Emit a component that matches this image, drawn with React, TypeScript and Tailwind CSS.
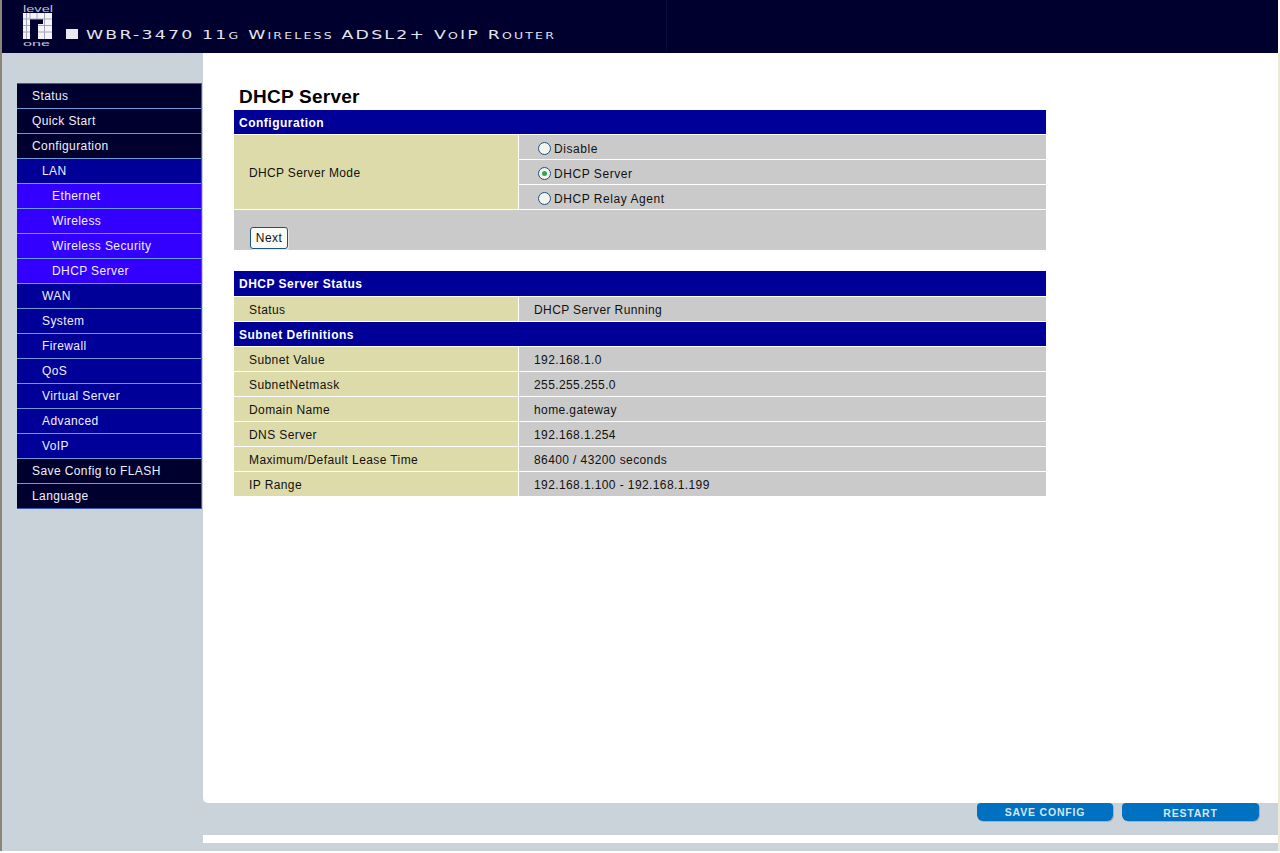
const menu: [string, number][] = [
  ["Status", 0],
  ["Quick Start", 0],
  ["Configuration", 0],
  ["LAN", 1],
  ["Ethernet", 2],
  ["Wireless", 2],
  ["Wireless Security", 2],
  ["DHCP Server", 2],
  ["WAN", 1],
  ["System", 1],
  ["Firewall", 1],
  ["QoS", 1],
  ["Virtual Server", 1],
  ["Advanced", 1],
  ["VoIP", 1],
  ["Save Config to FLASH", 0],
  ["Language", 0],
];

const rows: [string, string][] = [
  ["Subnet Value", "192.168.1.0"],
  ["SubnetNetmask", "255.255.255.0"],
  ["Domain Name", "home.gateway"],
  ["DNS Server", "192.168.1.254"],
  ["Maximum/Default Lease Time", "86400 / 43200 seconds"],
  ["IP Range", "192.168.1.100 - 192.168.1.199"],
];

function Logo() {
  return (
    <svg width="31" height="46" viewBox="0 0 31 46" className="block">
      <rect x="1" y="10" width="29" height="26" fill="#f4f4f8" />
      <path d="M8 16H21V21H16V36H8Z" fill="#00002e" />
      <path d="M1 16H30M1 22.500H8M16 22.500H30M1 29H8M16 29H30M8 10V16M15 10V16M22.500 10V36M4.500 10V36" stroke="#a4a4c0" strokeWidth="1" fill="none" />
      <text x="1" y="8.500" textLength="30" lengthAdjust="spacingAndGlyphs" fontSize="9" fill="#c0c0d0" fontFamily="'Liberation Sans', sans-serif">level</text>
      <text x="1" y="43" textLength="27" lengthAdjust="spacingAndGlyphs" fontSize="7" fill="#c0c0d0" fontFamily="'Liberation Sans', sans-serif">one</text>
    </svg>
  );
}

function Radio({ checked }: { checked?: boolean }) {
  return (
    <span className="w-[13px] h-[13px] rounded-full border border-[#1c5180] bg-[#f4f4ee] flex items-center justify-center shrink-0">
      {checked && <span className="w-[5px] h-[5px] rounded-full bg-[#2ea84a]" />}
    </span>
  );
}

function SectionHead({ children, className }: { children: string; className: string }) {
  return <div className={"bg-[#000099] text-white font-bold pl-[5px] flex items-center tracking-[0.5px] border-b border-white " + className}>{children}</div>;
}

function Row({ label, value }: { label: string; value: string }) {
  return (
    <div className="flex h-[25px] border-b border-white last:border-b-0 last:h-[24px] tracking-[0.4px]">
      <div className="w-[284px] bg-[#dddbaa] pl-[15px] pt-[1px] flex items-center">{label}</div>
      <div className="w-px bg-white" />
      <div className="flex-1 bg-[#cacaca] pl-[15px] pt-[1px] flex items-center">{value}</div>
    </div>
  );
}

function Pill({ children, className }: { children: string; className: string }) {
  return (
    <div className={"h-[18px] bg-[#0070c0] rounded-b-[6px] rounded-t-[4px] shadow-[1px_1px_0_#a8aeb4] text-[#d4e6f4] text-[10.500px] font-bold tracking-[0.8px] flex items-center justify-center " + className}>
      {children}
    </div>
  );
}

export default function App() {
  return (
    <div className="w-[1280px] h-[853px] overflow-hidden flex bg-white font-['Liberation_Sans',Arial,sans-serif] text-[12px] leading-none text-[#111]">
      <div className="w-[2px] bg-[#8a8678] h-[851px]" />
      <div className="w-[1276px] h-[851px] flex flex-col bg-[#cad2da]">
        <header className="h-[53px] bg-[#00002e] flex items-end pl-[20px] shrink-0 relative">
          <div className="pb-[4px] mr-[13px]"><Logo /></div>
          <div className="w-[12px] h-[10px] bg-[#e8e8f0] mb-[14px] mr-[8px]" />
          <div className="text-[#e4e4ee] text-[12.500px] font-['DejaVu_Sans',sans-serif] tracking-[1.6px] [font-variant:small-caps] mb-[12px] whitespace-nowrap origin-left scale-x-[1.385]">
            WBR-3470 11g Wireless ADSL2+ VoIP Router
          </div>
          <div className="absolute left-[664px] top-0 h-[50px] w-px bg-[#0c0c3c]" />
        </header>
        <div className="flex flex-1 min-h-0">
          <nav className="w-[201px] shrink-0 pl-[15px] pr-[1px] pt-[30px]">
            <div className="border-t border-r border-[#3a5ab0]">
              {menu.map(([name, level]) => (
                <div
                  key={name}
                  className={
                    "h-[25px] border-b border-[#6f9ad8] last:border-[#3a5ab0] text-[#f0f0fa] tracking-[0.4px] pb-[1px] flex items-center " +
                    (level === 0 ? "bg-[#00002e] pl-[15px]" : level === 1 ? "bg-[#000099] pl-[25px]" : "bg-[#3300ff] pl-[35px]")
                  }
                >
                  {name}
                </div>
              ))}
            </div>
          </nav>
          <div className="flex-1 flex flex-col min-w-0">
            <main className="h-[750px] bg-white rounded-bl-[5px] pl-[31px] shrink-0">
              <div className="w-[812px]">
                <h1 className="text-[19px] font-bold text-black pt-[34px] pl-[5px] h-[57px] tracking-[0.25px]">DHCP Server</h1>
                <SectionHead className="h-[25px] pt-[2px]">Configuration</SectionHead>
                <div className="flex h-[75px] border-b border-white tracking-[0.35px]">
                  <div className="w-[284px] bg-[#dddbaa] pl-[15px] pt-[1px] flex items-center">DHCP Server Mode</div>
                  <div className="w-px bg-white" />
                  <div className="flex-1 flex flex-col">
                    {[["Disable", false], ["DHCP Server", true], ["DHCP Relay Agent", false]].map(([t, c]) => (
                      <div key={t as string} className="h-[25px] bg-[#cacaca] border-b border-white last:border-b-0 last:h-[24px] pl-[19px] pt-[2px] flex items-center gap-[3px] tracking-[0.55px]">
                        <Radio checked={c as boolean} />
                        <span className="pt-[2px]">{t as string}</span>
                      </div>
                    ))}
                  </div>
                </div>
                <div className="h-[40px] bg-[#cacaca] pl-[16px] pt-[17px]">
                  <button className="w-[38px] h-[22px] rounded-[3px] border border-[#1c5180] bg-[#fbfbf6] text-[#111] tracking-[0.4px] shadow-[1px_1px_0_#e8e8e8] flex items-center justify-center">Next</button>
                </div>
                <div className="h-[21px]" />
                <SectionHead className="h-[26px] pt-[1px]">DHCP Server Status</SectionHead>
                <Row label="Status" value="DHCP Server Running" />
                <SectionHead className="h-[25px] pt-[1px]">Subnet Definitions</SectionHead>
                {rows.map(([l, v]) => <Row key={l} label={l} value={v} />)}
              </div>
            </main>
            <div className="h-[32px] shrink-0 flex items-start justify-end pr-[19px] gap-[9px]">
              <Pill className="w-[136px] pt-[1px]">SAVE CONFIG</Pill>
              <Pill className="w-[137px] pt-[3px]">RESTART</Pill>
            </div>
            <div className="h-[8px] bg-white shrink-0" />
          </div>
        </div>
      </div>
      <div className="flex flex-col w-[2px] h-[851px]">
        <div className="h-[53px] bg-white" />
        <div className="flex-1 bg-[#ece9d8]" />
      </div>
    </div>
  );
}
